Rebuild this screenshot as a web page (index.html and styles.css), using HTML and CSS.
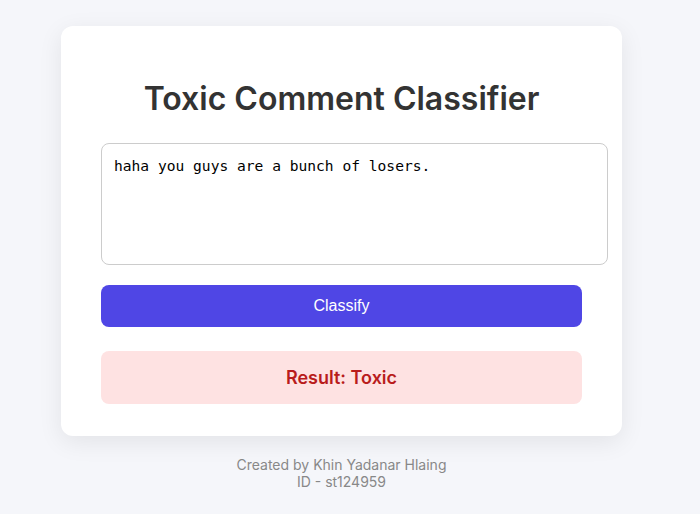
FILE: index.html
```html
<!DOCTYPE html>
<html lang="en">
<head>
<meta charset="utf-8">
<title>Toxic Comment Classifier</title>
<link rel="stylesheet" href="styles.css">
</head>
<body>
  <div class="page">
    <main class="card">
      <h1 class="title">Toxic Comment Classifier</h1>
      <textarea class="comment">haha you guys are a bunch of losers.</textarea>
      <button class="classify">Classify</button>
      <div class="result">Result: Toxic</div>
    </main>
    <footer class="credit">
      <div>Created by Khin Yadanar Hlaing</div>
      <div>ID - st124959</div>
    </footer>
  </div>
</body>
</html>
```

FILE: styles.css
```css
html, body {
  margin: 0;
  padding: 0;
}
body {
  background: #f5f6fa;
  font-family: Inter, "Liberation Sans", sans-serif;
  padding-top: 26px;
}
.page {
  margin-left: 61px;
  width: 561px;
  display: flex;
  flex-direction: column;
}
.card {
  padding: 32px 40px;
  background: #ffffff;
  border-radius: 12px;
  box-shadow: 0 6px 24px rgba(0, 0, 0, 0.08);
}
.title {
  font-size: 32px;
  font-weight: 600;
  color: #333333;
  text-align: center;
  margin: 22px 0 24px;
  line-height: 1.21;
}
.comment {
  display: block;
  width: 100%;
  height: 95px;
  padding: 13px 12px 12px;
  border: 1px solid #cccccc;
  border-radius: 8px;
  font-family: "DejaVu Sans Mono", monospace;
  font-size: 14.6px;
  color: #000;
  resize: none;
  margin: 0;
}
.classify {
  display: block;
  width: 100%;
  height: 42px;
  margin-top: 20px;
  border: none;
  border-radius: 8px;
  background: #4f46e5;
  color: #ffffff;
  font-family: "Liberation Sans", Arial, sans-serif;
  font-size: 16px;
}
.result {
  margin-top: 24px;
  height: 53px;
  display: flex;
  align-items: center;
  justify-content: center;
  background: #fee2e2;
  border-radius: 8px;
  color: #b91c1c;
  font-size: 18px;
  font-weight: 600;
}
.credit {
  margin-top: 20px;
  text-align: center;
  color: #888888;
  font-size: 14px;
  line-height: 17px;
}
```
